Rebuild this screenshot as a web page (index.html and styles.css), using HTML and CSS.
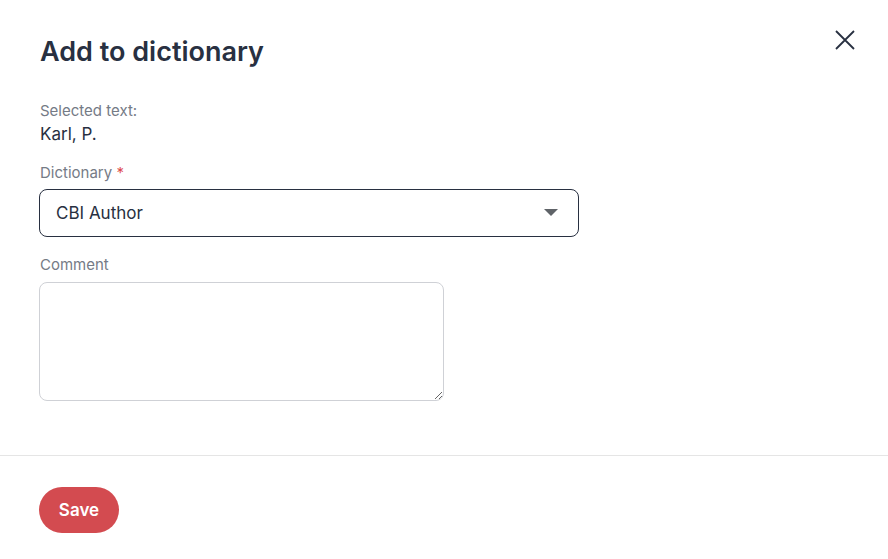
FILE: index.html
```html
<!DOCTYPE html>
<html>
<head>
    <title>Add to dictionary</title>
    <link rel="stylesheet" href="styles.css">
</head>
<body>
    <div class="modal">
        <div class="modal-body">
            <div class="modal-header">
                <h1>Add to dictionary</h1>
                <button class="close-button" aria-label="Close">
                    <svg width="20" height="20" viewBox="0 0 20 20">
                        <path d="M1 1 L19 19 M19 1 L1 19" stroke="#283041" stroke-width="1.8" fill="none"/>
                    </svg>
                </button>
            </div>

            <div class="field">
                <div class="field-label">Selected text:</div>
                <div class="field-value">Karl, P.</div>
            </div>

            <div class="field">
                <div class="field-label">Dictionary <span class="required">*</span></div>
                <div class="select">
                    <span>CBI Author</span>
                    <svg class="select-arrow" width="14" height="8" viewBox="0 0 14 8">
                        <path d="M0 0 L14 0 L7 7 Z" fill="#5f6368"/>
                    </svg>
                </div>
            </div>

            <div class="field">
                <div class="field-label">Comment</div>
                <textarea class="comment"></textarea>
            </div>
        </div>

        <div class="modal-footer">
            <button class="save-button">Save</button>
        </div>
    </div>
</body>
</html>
```

FILE: styles.css
```css
body {
    margin: 0;
    font-family: Inter, "Noto Sans", Arial, sans-serif;
    background-color: #fff;
    color: #283041;
}
.modal {
    width: 888px;
}
.modal-body {
    padding: 34px 40px 54px;
}
.modal-header {
    display: flex;
    justify-content: space-between;
    align-items: flex-start;
    margin-bottom: 31px;
}
h1 {
    margin: 0;
    font-size: 27px;
    line-height: 36px;
    font-weight: 600;
    color: #283041;
}
.close-button {
    margin-top: -6px;
    margin-right: -9px;
    padding: 0;
    border: none;
    background: none;
    cursor: pointer;
    width: 24px;
    height: 24px;
    display: flex;
    align-items: center;
    justify-content: center;
}
.field {
    margin-bottom: 18px;
}
.field:last-child {
    margin-bottom: 0;
}
.field-label {
    font-size: 15px;
    line-height: 20px;
    color: #757b86;
    margin-bottom: 2px;
}
.required {
    color: #dd4b4f;
}
.field-value {
    font-size: 17px;
    line-height: 22px;
    color: #283041;
}
.select {
    margin: 6px 0 0 -1px;
    width: 540px;
    height: 48px;
    box-sizing: border-box;
    border: 1px solid #283041;
    border-radius: 8px;
    padding: 0 20px 0 16px;
    display: flex;
    align-items: center;
    justify-content: space-between;
    font-size: 17px;
    color: #283041;
}
.comment {
    display: block;
    margin: 7px 0 0 -1px;
    width: 405px;
    height: 119px;
    box-sizing: border-box;
    border: 1px solid #cfd1d6;
    border-radius: 8px;
    font-family: inherit;
    font-size: 16px;
}
.modal-footer {
    border-top: 1px solid #e5e5e5;
    padding: 31px 40px;
}
.save-button {
    margin-left: -1px;
    width: 80px;
    height: 46px;
    border: none;
    border-radius: 23px;
    background-color: #d34b50;
    color: #fff;
    font-family: inherit;
    font-size: 17px;
    font-weight: 600;
    cursor: pointer;
}
```
